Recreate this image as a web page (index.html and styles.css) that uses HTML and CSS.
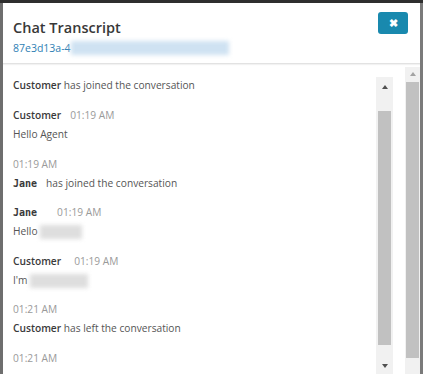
FILE: index.html
```html
<!DOCTYPE html>
<html lang="en">
<head>
    <meta charset="UTF-8">
    <title>Chat Transcript</title>
    <link rel="stylesheet" href="styles.css">
</head>
<body>

    <div class="frame">
        <div class="modal">
            <div class="header">
                <div class="titles">
                    <h2 class="title">Chat Transcript</h2>
                    <div class="contact-id">87e3d13a-4<span class="blur blur-link"></span></div>
                </div>
                <button class="close-btn">&#10006;</button>
            </div>

            <div class="body">
                <div class="transcript">
                    <div class="event">
                        <span class="name">Customer</span> has joined the conversation
                    </div>

                    <div class="msg">
                        <div class="meta"><span class="name">Customer</span><span class="time">01:19 AM</span></div>
                        <div class="text">Hello Agent</div>
                    </div>

                    <div class="msg">
                        <div class="meta"><span class="time first">01:19 AM</span></div>
                        <div class="text"><span class="name agent">Jane</span>has joined the conversation</div>
                    </div>

                    <div class="msg">
                        <div class="meta"><span class="name agent">Jane</span><span class="time">01:19 AM</span></div>
                        <div class="text">Hello<span class="blur blur-a"></span></div>
                    </div>

                    <div class="msg">
                        <div class="meta"><span class="name">Customer</span><span class="time wide">01:19 AM</span></div>
                        <div class="text">I'm<span class="blur blur-b"></span></div>
                    </div>

                    <div class="msg">
                        <div class="meta"><span class="time first">01:21 AM</span></div>
                        <div class="text"><span class="name">Customer</span> has left the conversation</div>
                    </div>

                    <div class="msg">
                        <div class="meta"><span class="time first">01:21 AM</span></div>
                        <div class="text"></div>
                    </div>
                </div>

                <div class="scrollbar inner">
                    <div class="arrow up"></div>
                    <div class="thumb"></div>
                    <div class="arrow down"></div>
                </div>

                <div class="scrollbar outer">
                    <div class="arrow up light"></div>
                    <div class="thumb"></div>
                </div>
            </div>
        </div>
    </div>

</body>
</html>
```

FILE: styles.css
```css
body {
    margin: 0;
    background-color: #2e2e2e;
    font-family: "Open Sans", Arial, sans-serif;
}
.frame {
    height: 371px;
    margin-top: 3px;
    border-left: 3px solid #6e6e6e;
    border-right: 3px solid #7a7a7a;
    background-color: #fff;
    overflow: hidden;
}
.modal {
    display: flex;
    flex-direction: column;
    height: 100%;
}
.header {
    display: flex;
    justify-content: space-between;
    align-items: flex-start;
    height: 60px;
    padding: 0 12px 0 10px;
    border-bottom: 1px solid #e2e2e2;
    box-shadow: 0 1px 1px rgba(0, 0, 0, 0.05);
}
.title {
    margin: 15px 0 0;
    font-size: 14.5px;
    font-weight: 600;
    color: #383838;
    line-height: 19px;
}
.contact-id {
    margin-top: 3px;
    font-size: 10.5px;
    color: #2f7fb4;
    line-height: 16px;
    display: flex;
    align-items: center;
}
.close-btn {
    margin-top: 9px;
    width: 30px;
    height: 22px;
    border: none;
    border-radius: 3px;
    background-color: #1989ae;
    color: #fff;
    font-size: 11px;
    font-weight: bold;
    padding: 0;
    line-height: 22px;
}
.body {
    flex: 1;
    display: flex;
    min-height: 0;
}
.transcript {
    flex: 1;
    padding: 12px 0 0 10px;
    font-size: 10.2px;
    color: #555;
    line-height: 19px;
}
.event {
    margin-bottom: 11px;
}
.msg {
    margin-bottom: 10.5px;
}
.name {
    font-weight: 600;
    color: #3a3a3a;
}
.name.agent {
    font-family: "DejaVu Sans Mono", monospace;
    font-size: 10px;
    font-weight: bold;
    margin-right: 9px;
}
.time {
    color: #9a9a9a;
    margin-left: 9px;
}
.time.first {
    margin-left: 0;
}
.time.wide {
    margin-left: 13px;
}
.name.agent + .time {
    margin-left: 11px;
}
.blur {
    display: inline-block;
    vertical-align: middle;
    height: 14px;
    background-color: #dedede;
    filter: blur(2px);
}
.blur-link {
    width: 158px;
    background-color: #cfe2f2;
}
.blur-a {
    width: 42px;
    margin-left: 2px;
}
.blur-b {
    width: 58px;
    margin-left: 2px;
}
.scrollbar {
    display: flex;
    flex-direction: column;
    align-items: center;
    background-color: #f1f1f1;
}
.scrollbar.inner {
    width: 17px;
    margin: 13px 12px 0 0;
}
.scrollbar.outer {
    width: 15px;
    margin-top: 3px;
}
.thumb {
    background-color: #c1c1c1;
    width: 13px;
}
.inner .thumb {
    flex: 1;
}
.outer .thumb {
    height: 276px;
}
.arrow {
    width: 0;
    height: 0;
    border-left: 3.5px solid transparent;
    border-right: 3.5px solid transparent;
}
.arrow.up {
    border-bottom: 4px solid #505050;
    margin: 8px 0 22px;
}
.arrow.up.light {
    border-bottom-color: #a3a3a3;
    margin: 5px 0 6px;
}
.arrow.down {
    border-top: 4px solid #505050;
    margin: 19px 0 6px;
}
```
